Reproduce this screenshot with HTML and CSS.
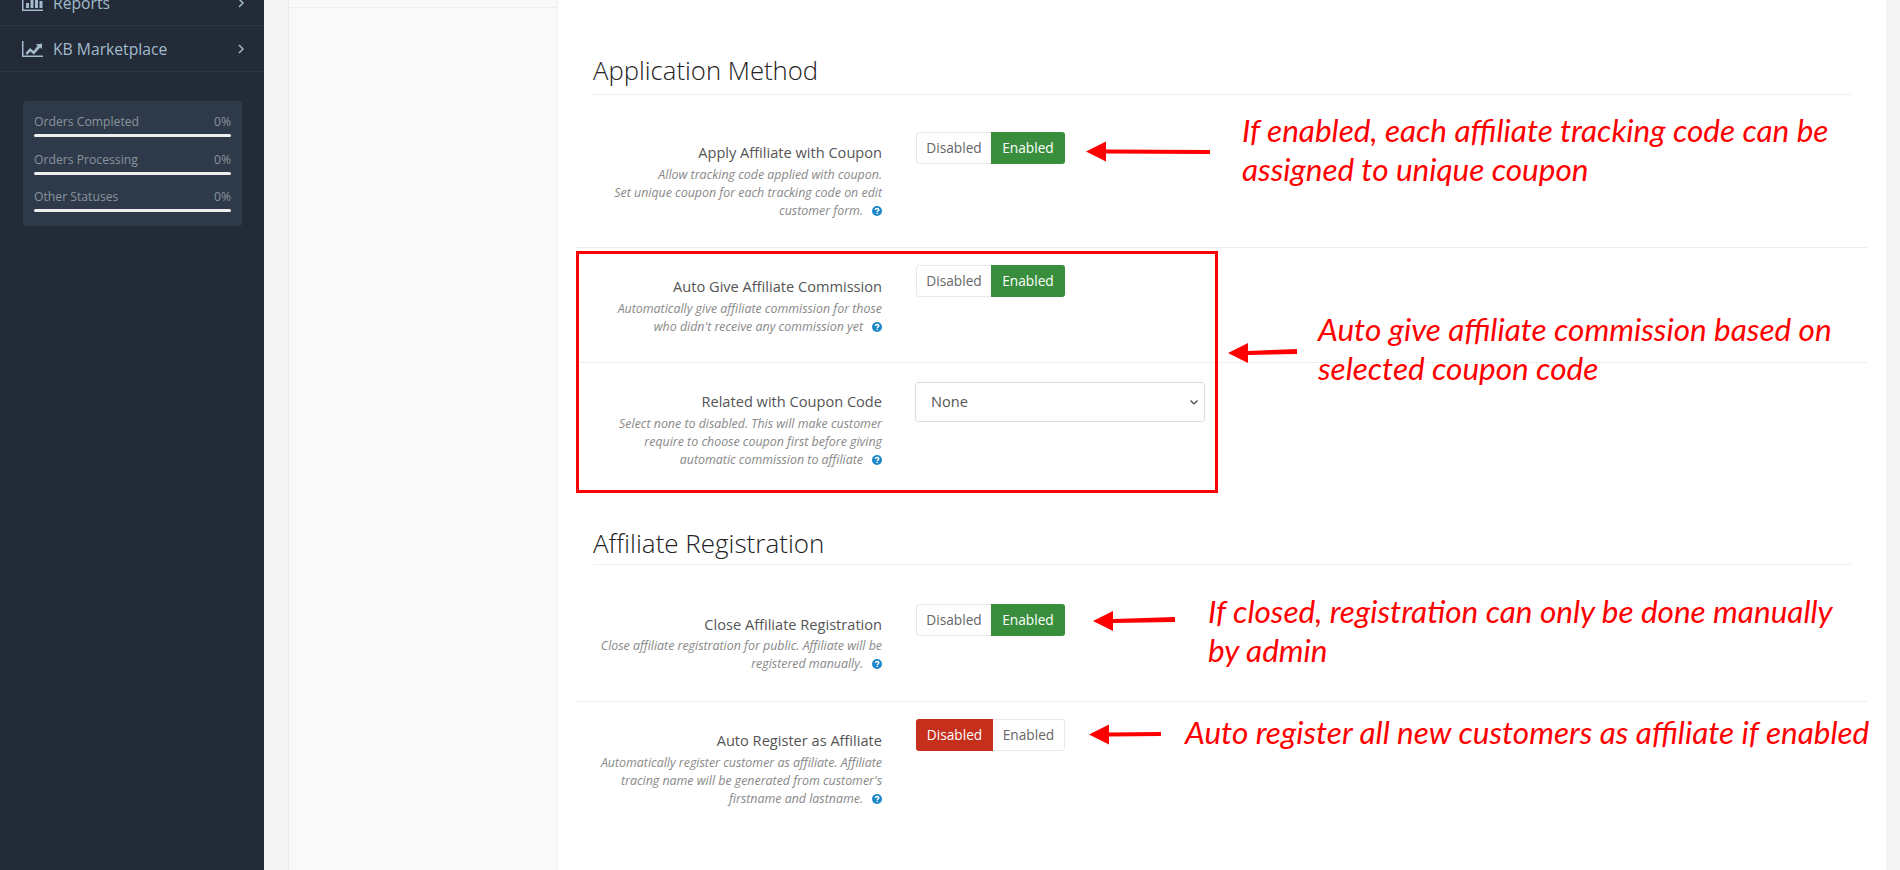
FILE: index.html
```html
<!DOCTYPE html>
<html lang="en">

<head>
    <meta charset="UTF-8">
    <title>Affiliate Settings</title>
    <link rel="stylesheet" href="styles.css">
</head>

<body>
    <div class="page">
        <aside class="sidebar">
            <ul class="side_menu">
                <li>
                    <svg class="side_icon" viewBox="0 0 21 16"><path d="M0 0h1.500v14.500H21V16H0z"/><path d="M4 8h3v5H4zM8.500 4h3v9h-3zM13 1h3v12h-3zM17.500 6h3v7h-3z"/></svg>
                    <span>Reports</span>
                    <svg class="side_arrow" viewBox="0 0 6 10"><path d="M1 1l4 4-4 4"/></svg>
                </li>
                <li>
                    <svg class="side_icon" viewBox="0 0 21 16"><path d="M0 0h1.500v14.500H21V16H0z"/><path d="M3.500 12l4.500-5 3.500 3 4-5-1.800-1.500L20 2.500V8l-1.800-1.600-6.400 7-3.500-3-3.300 3.500z"/></svg>
                    <span>KB Marketplace</span>
                    <svg class="side_arrow" viewBox="0 0 6 10"><path d="M1 1l4 4-4 4"/></svg>
                </li>
            </ul>
            <div class="stats">
                <div class="stat"><p><span>Orders Completed</span><span>0%</span></p><i></i></div>
                <div class="stat"><p><span>Orders Processing</span><span>0%</span></p><i></i></div>
                <div class="stat"><p><span>Other Statuses</span><span>0%</span></p><i></i></div>
            </div>
        </aside>

        <div class="tabs_col"><div class="tabs_end"></div></div>

        <main class="content">
            <h2 class="legend">Application Method</h2>

            <div class="row row_first">
                <div class="label">
                    <label>Apply Affiliate with Coupon</label>
                    <p class="help">Allow tracking code applied with coupon.<br>Set unique coupon for each tracking code on edit<br>customer form.<svg class="tip" viewBox="0 0 10 10"><circle cx="5" cy="5" r="5"/><path d="M3.300 3.900c.1-1 .8-1.500 1.800-1.500s1.700.5 1.700 1.400c0 1.200-1.500 1.200-1.600 2.400"/><path d="M5.200 7.100v1"/></svg></p>
                </div>
                <div class="toggle"><span>Disabled</span><span class="on">Enabled</span></div>
            </div>

            <div class="row">
                <div class="label">
                    <label>Auto Give Affiliate Commission</label>
                    <p class="help">Automatically give affiliate commission for those<br>who didn't receive any commission yet<svg class="tip" viewBox="0 0 10 10"><circle cx="5" cy="5" r="5"/><path d="M3.300 3.900c.1-1 .8-1.500 1.800-1.500s1.700.5 1.700 1.400c0 1.200-1.500 1.200-1.600 2.400"/><path d="M5.200 7.100v1"/></svg></p>
                </div>
                <div class="toggle"><span>Disabled</span><span class="on">Enabled</span></div>
            </div>

            <div class="row row_last">
                <div class="label">
                    <label>Related with Coupon Code</label>
                    <p class="help">Select none to disabled. This will make customer<br>require to choose coupon first before giving<br>automatic commission to affiliate<svg class="tip" viewBox="0 0 10 10"><circle cx="5" cy="5" r="5"/><path d="M3.300 3.900c.1-1 .8-1.500 1.800-1.500s1.700.5 1.700 1.400c0 1.200-1.500 1.200-1.600 2.400"/><path d="M5.200 7.100v1"/></svg></p>
                </div>
                <div class="select_wrap">
                    <select class="select"><option>None</option></select>
                    <svg class="select_arrow" viewBox="0 0 8 5"><path d="M.5.500L4 4 7.500.5"/></svg>
                </div>
            </div>

            <h2 class="legend legend_two">Affiliate Registration</h2>

            <div class="row row_close">
                <div class="label">
                    <label>Close Affiliate Registration</label>
                    <p class="help">Close affiliate registration for public. Affiliate will be<br>registered manually.<svg class="tip" viewBox="0 0 10 10"><circle cx="5" cy="5" r="5"/><path d="M3.300 3.900c.1-1 .8-1.500 1.800-1.500s1.700.5 1.700 1.400c0 1.200-1.500 1.200-1.600 2.400"/><path d="M5.200 7.100v1"/></svg></p>
                </div>
                <div class="toggle"><span>Disabled</span><span class="on">Enabled</span></div>
            </div>

            <div class="row row_last">
                <div class="label">
                    <label>Auto Register as Affiliate</label>
                    <p class="help">Automatically register customer as affiliate. Affiliate<br>tracing name will be generated from customer's<br>firstname and lastname.<svg class="tip" viewBox="0 0 10 10"><circle cx="5" cy="5" r="5"/><path d="M3.300 3.900c.1-1 .8-1.500 1.800-1.500s1.700.5 1.700 1.400c0 1.200-1.500 1.200-1.600 2.400"/><path d="M5.200 7.100v1"/></svg></p>
                </div>
                <div class="toggle"><span class="off">Disabled</span><span>Enabled</span></div>
            </div>
        </main>

        <div class="gutter"></div>
    </div>

    <!-- red markup drawn over the screenshot -->
    <div class="red_box"></div>
    <svg class="arrows" viewBox="0 0 1900 870">
        <path d="M1210 150v4l-104-.5v8l-20-10 20-10v8z"/>
        <path d="M1297 349v5l-49 1v8l-20-10 20-10v8z"/>
        <path d="M1175 617v5l-62 1v8l-20-10 20-10v8z"/>
        <path d="M1161 732v4l-52 .5v8l-20-10 20-10v8z"/>
    </svg>
    <p class="note note_a">If enabled, each affiliate tracking code can be<br>assigned to unique coupon</p>
    <p class="note note_b">Auto give affiliate commission based on<br>selected coupon code</p>
    <p class="note note_c">If closed, registration can only be done manually<br>by admin</p>
    <p class="note note_d">Auto register all new customers as affiliate if enabled</p>
</body>

</html>
```

FILE: styles.css
```css
* {
    margin: 0;
    padding: 0;
    box-sizing: border-box;
}

html,
body {
    height: 100%;
    overflow: hidden;
}

body {
    font-family: "Open Sans", "Liberation Sans", sans-serif;
    font-size: 14.600px;
    color: #555;
    background-color: #f5f5f5;
}

.page {
    display: flex;
    height: 870px;
}

/* sidebar */
.sidebar {
    width: 264px;
    flex: none;
    background-color: #222b37;
    overflow: hidden;
}

.side_menu {
    list-style: none;
    margin-top: -20px;
}

.side_menu li {
    display: flex;
    align-items: center;
    height: 46px;
    padding: 0 20px 0 22px;
    border-bottom: 1px solid #2c3644;
    color: #a3bacd;
    font-size: 15.700px;
}

.side_menu span {
    flex: 1;
    margin-left: 10px;
}

.side_icon {
    width: 21px;
    height: 16px;
    fill: #a3bacd;
}

.side_arrow {
    width: 6px;
    height: 10px;
    fill: none;
    stroke: #a3bacd;
    stroke-width: 1.500;
}

.stats {
    width: 219px;
    height: 125px;
    margin: 29px 0 0 23px;
    padding: 12px 11px 0;
    background-color: #2e3a49;
    border-radius: 3px;
}

.stat {
    height: 37.500px;
}

.stat p {
    display: flex;
    justify-content: space-between;
    height: 21px;
    line-height: 18px;
    font-size: 12.200px;
    color: #89939e;
}

.stat i {
    display: block;
    height: 3px;
    background-color: #eee;
    border-radius: 2px;
}

/* empty tab column */
.tabs_col {
    width: 270px;
    flex: none;
    margin-left: 24px;
    background-color: #f9f9f9;
    border-left: 1px solid #e8e8e8;
    border-right: 1px solid #eee;
}

.tabs_end {
    height: 8px;
    border-bottom: 1px solid #eee;
}

/* form */
.content {
    flex: 1;
    padding: 0 19px 0 18px;
    background-color: #fff;
}

.gutter {
    width: 14px;
    flex: none;
}

.legend {
    margin: 54px 16px 0 17px;
    padding-bottom: 6px;
    border-bottom: 1px solid #eee;
    font-size: 25.700px;
    font-weight: 300;
    line-height: 34px;
    color: #222;
}

.legend_two {
    margin-top: 48px;
    padding-bottom: 4px;
    font-size: 26px;
}

.row {
    display: flex;
    align-items: flex-start;
    height: 115px;
    padding-top: 17px;
    border-bottom: 1px solid #eee;
}

.row_first {
    height: 153px;
    padding-top: 37px;
}

.row_close {
    height: 137px;
    padding-top: 39px;
}

.row_last {
    border-bottom: 0;
}

.label {
    width: 306px;
    flex: none;
    margin-right: 34px;
    padding-top: 11px;
    text-align: right;
}

.row_first .label,
.row_close .label {
    padding-top: 10px;
}

.label label {
    display: block;
    line-height: 20px;
    color: #555;
}

.help {
    margin-top: 4px;
    font-size: 12.400px;
    font-style: italic;
    line-height: 18px;
    color: #888;
}

.row_close .help {
    margin-top: 3px;
}

.tip {
    width: 10px;
    height: 10px;
    margin-left: 9px;
    vertical-align: -1px;
}

.tip circle {
    fill: #1b87c9;
}

.tip path {
    fill: none;
    stroke: #fff;
    stroke-width: 1.500;
}

.toggle {
    display: flex;
    width: 149px;
    height: 32px;
    border: 1px solid #e8e8e8;
    border-radius: 3px;
    font-size: 13.700px;
    line-height: 30px;
    color: #666;
}

.toggle span {
    flex: 1;
    text-align: center;
}

.toggle .on {
    flex: none;
    width: 74px;
    margin: -1px -1px -1px 0;
    line-height: 32px;
    color: #fff;
    background-color: #388e3c;
    border-radius: 0 3px 3px 0;
}

.toggle .off {
    flex: none;
    width: 77px;
    margin: -1px 0 -1px -1px;
    line-height: 32px;
    color: #fff;
    background-color: #c62f1c;
    border-radius: 3px 0 0 3px;
}

.select_wrap {
    position: relative;
    margin: 2px 0 0 -1px;
}

.select {
    display: block;
    width: 290px;
    height: 40px;
    padding: 0 0 2px 15px;
    appearance: none;
    font-family: inherit;
    font-size: 14.600px;
    color: #555;
    background-color: #fff;
    border: 1px solid #ddd;
    border-radius: 3px;
}

.select_arrow {
    position: absolute;
    right: 7px;
    top: 18px;
    width: 8px;
    height: 5px;
    fill: none;
    stroke: #444;
    stroke-width: 1.200;
}

/* red markup */
.red_box {
    position: absolute;
    left: 576px;
    top: 251px;
    width: 642px;
    height: 242px;
    border: 3px solid #f00;
}

.arrows {
    position: absolute;
    left: 0;
    top: 0;
    width: 1900px;
    height: 870px;
    fill: #f00;
}

.note {
    position: absolute;
    font-family: "Lato", "Liberation Sans", sans-serif;
    font-size: 31.500px;
    font-style: italic;
    line-height: 39px;
    color: #f00;
    white-space: nowrap;
}

.note_a {
    left: 1242px;
    top: 111px;
}

.note_b {
    left: 1318px;
    top: 310px;
}

.note_c {
    left: 1208px;
    top: 592px;
}

.note_d {
    left: 1185px;
    top: 713px;
}
```
